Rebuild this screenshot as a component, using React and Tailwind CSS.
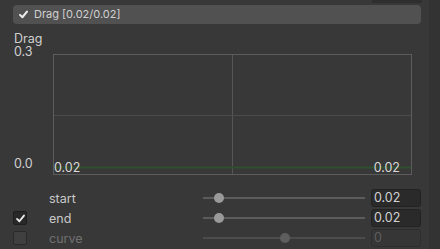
import React from 'react';

const font = { fontFamily: 'Inter, "Noto Sans", sans-serif' };

const Check = ({ className, width = 1.8 }) => (
  <svg viewBox="0 0 12 12" className={className} fill="none">
    <path d="M2.2 6.4 L4.8 9 L9.8 2.8" stroke="#ececec" strokeWidth={width} strokeLinecap="round" strokeLinejoin="round" />
  </svg>
);

const Slider = ({ pos, dim }) => (
  <div className="relative w-[162px] h-[14px] flex items-center">
    <div className={`w-full h-[2px] ${dim ? 'bg-[#4c4c4c]' : 'bg-[#5c5c5c]'}`} />
    <div
      className={`absolute top-[2px] w-[10px] h-[10px] rounded-full ${dim ? 'bg-[#5e5e5e]' : 'bg-[#9a9a9a]'}`}
      style={{ left: pos }}
    />
  </div>
);

const Row = ({ label, checkbox, checked, pos, value, dim }) => (
  <div className="flex items-center h-[20px]">
    <div className="w-[36px] pl-[13px] flex items-center">
      {checkbox && (
        <div className={`w-[14px] h-[14px] rounded-[2px] border flex items-center justify-center ${checked ? 'bg-[#282828] border-[#1e1e1e]' : 'bg-[#404040] border-[#2a2a2a]'}`}>
          {checked && <Check className="w-[11px] h-[11px]" width={2} />}
        </div>
      )}
    </div>
    <div className={`w-[167px] pl-[13px] text-[12.5px] leading-[14px] pt-[1px] ${dim ? 'text-[#707070]' : 'text-[#c8c8c8]'}`}>{label}</div>
    <Slider pos={pos} dim={dim} />
    <div className={`ml-[6px] w-[50px] h-[18px] rounded-[3px] border flex items-center pl-[2px] text-[12.5px] ${dim ? 'bg-[#363636] border-[#2e2e2e] text-[#5e5e5e]' : 'bg-[#2a2a2a] border-[#222222] text-[#d2d2d2]'}`}>
      {value}
    </div>
  </div>
);

export default function App() {
  return (
    <div className="w-[440px] h-[249px] bg-[#383838] flex overflow-hidden" style={font}>
      <div className="w-[429px] flex flex-col relative">
        <div className="absolute left-[372px] top-0 w-[50px] h-[3px] bg-[#2e2e2e]" />
        <div className="mt-[5px] ml-[13px] w-[408px] h-[19px] rounded-[4px] bg-[#515151] flex items-center pl-[5px] gap-[5px]">
          <Check className="w-[11px] h-[11px]" width={2.2} />
          <span className="text-[11px] text-[#d0d0d0]">Drag [0.02/0.02]</span>
        </div>
        <div className="flex mt-[8px]">
          <div className="w-[53px] pl-[14px] flex flex-col text-[12.5px] text-[#d0d0d0] leading-[13px]">
            <span>Drag</span>
            <span>0.3</span>
            <span className="mt-[99px]">0.0</span>
          </div>
          <div className="relative mt-[22px] w-[359px] h-[121px] border border-[#5c5c5c]">
            <svg className="absolute inset-0" width="357" height="119">
              <line x1="178.5" y1="0" x2="178.5" y2="119" stroke="#555555" strokeWidth="1" />
              <line x1="0" y1="60.5" x2="357" y2="60.5" stroke="#4c4c4c" strokeWidth="1" />
              <line x1="0" y1="112.5" x2="357" y2="112.5" stroke="#30502e" strokeWidth="2" />
            </svg>
            <span className="absolute left-0 bottom-0 text-[12.5px] leading-[13px] text-[#d8d8d8]">0.02</span>
            <span className="absolute right-[11px] bottom-0 text-[12.5px] leading-[13px] text-[#d8d8d8]">0.02</span>
          </div>
        </div>
        <div className="flex flex-col mt-[13px]">
          <Row label="start" pos={11} value="0.02" />
          <Row label="end" checkbox checked pos={11} value="0.02" />
          <Row label="curve" checkbox pos={77} value="0" dim />
        </div>
      </div>
      <div className="w-[11px] bg-[#333333]" />
    </div>
  );
}
